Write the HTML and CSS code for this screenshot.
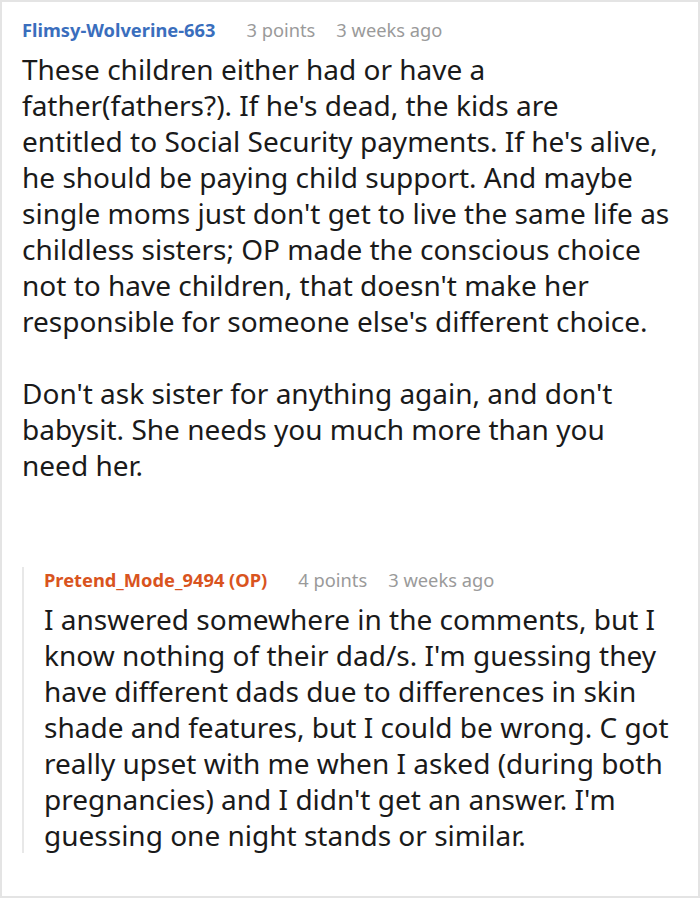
FILE: index.html
```html
<!DOCTYPE html>
<html>
<head>
<meta charset="utf-8">
<link rel="stylesheet" href="styles.css">
</head>
<body>
<div class="frame">
  <div class="comment">
    <div class="meta">
      <span class="author">Flimsy-Wolverine-663</span>
      <span class="info">3 points</span>
      <span class="info">3 weeks ago</span>
    </div>
    <div class="body main-body">
      <p>These children either had or have a<br>father(fathers?). If he's dead, the kids are<br>entitled to Social Security payments. If he's alive,<br>he should be paying child support. And maybe<br>single moms just don't get to live the same life as<br>childless sisters; OP made the conscious choice<br>not to have children, that doesn't make her<br>responsible for someone else's different choice.</p>
      <p>Don't ask sister for anything again, and don't<br>babysit. She needs you much more than you<br>need her.</p>
    </div>
    <div class="reply">
      <div class="meta">
        <span class="author op">Pretend_Mode_9494 (OP)</span>
        <span class="info">4 points</span>
        <span class="info">3 weeks ago</span>
      </div>
      <div class="body">
        <p>I answered somewhere in the comments, but I<br>know nothing of their dad/s. I'm guessing they<br>have different dads due to differences in skin<br>shade and features, but I could be wrong. C got<br>really upset with me when I asked (during both<br>pregnancies) and I didn't get an answer. I'm<br>guessing one night stands or similar.</p>
      </div>
    </div>
  </div>
</div>
</body>
</html>
```
FILE: styles.css
```css
html, body {
  margin: 0;
  padding: 0;
  background: #fff;
}
.frame {
  width: 700px;
  height: 898px;
  box-sizing: border-box;
  border: 2px solid #e4e4e4;
  overflow: hidden;
  font-family: "Noto Sans", "Open Sans", sans-serif;
  color: #1a1a1a;
}
.comment {
  padding: 15px 0 0 20px;
}
.meta {
  display: flex;
  gap: 31px;
  font-size: 18.3px;
  line-height: 26px;
  align-items: baseline;
  margin-bottom: 8px;
}
.author {
  font-weight: 700;
  color: #3a6ebd;
}
.author.op {
  color: #d9541e;
}
.meta .info + .info {
  margin-left: -10px;
}
.info {
  color: #9a9a9a;
}
.body {
  font-size: 28px;
  line-height: 36px;
  white-space: nowrap;
}
.body p {
  margin: 0 0 36px 0;
}
.body p:last-child {
  margin-bottom: 0;
}
.reply {
  margin-top: 94px;
  padding-left: 20px;
  border-left: 2px solid #e8e8e8;
}
.reply .meta {
  margin-top: -10px;
}
.reply .body {
  margin-bottom: -8px;
}
```
